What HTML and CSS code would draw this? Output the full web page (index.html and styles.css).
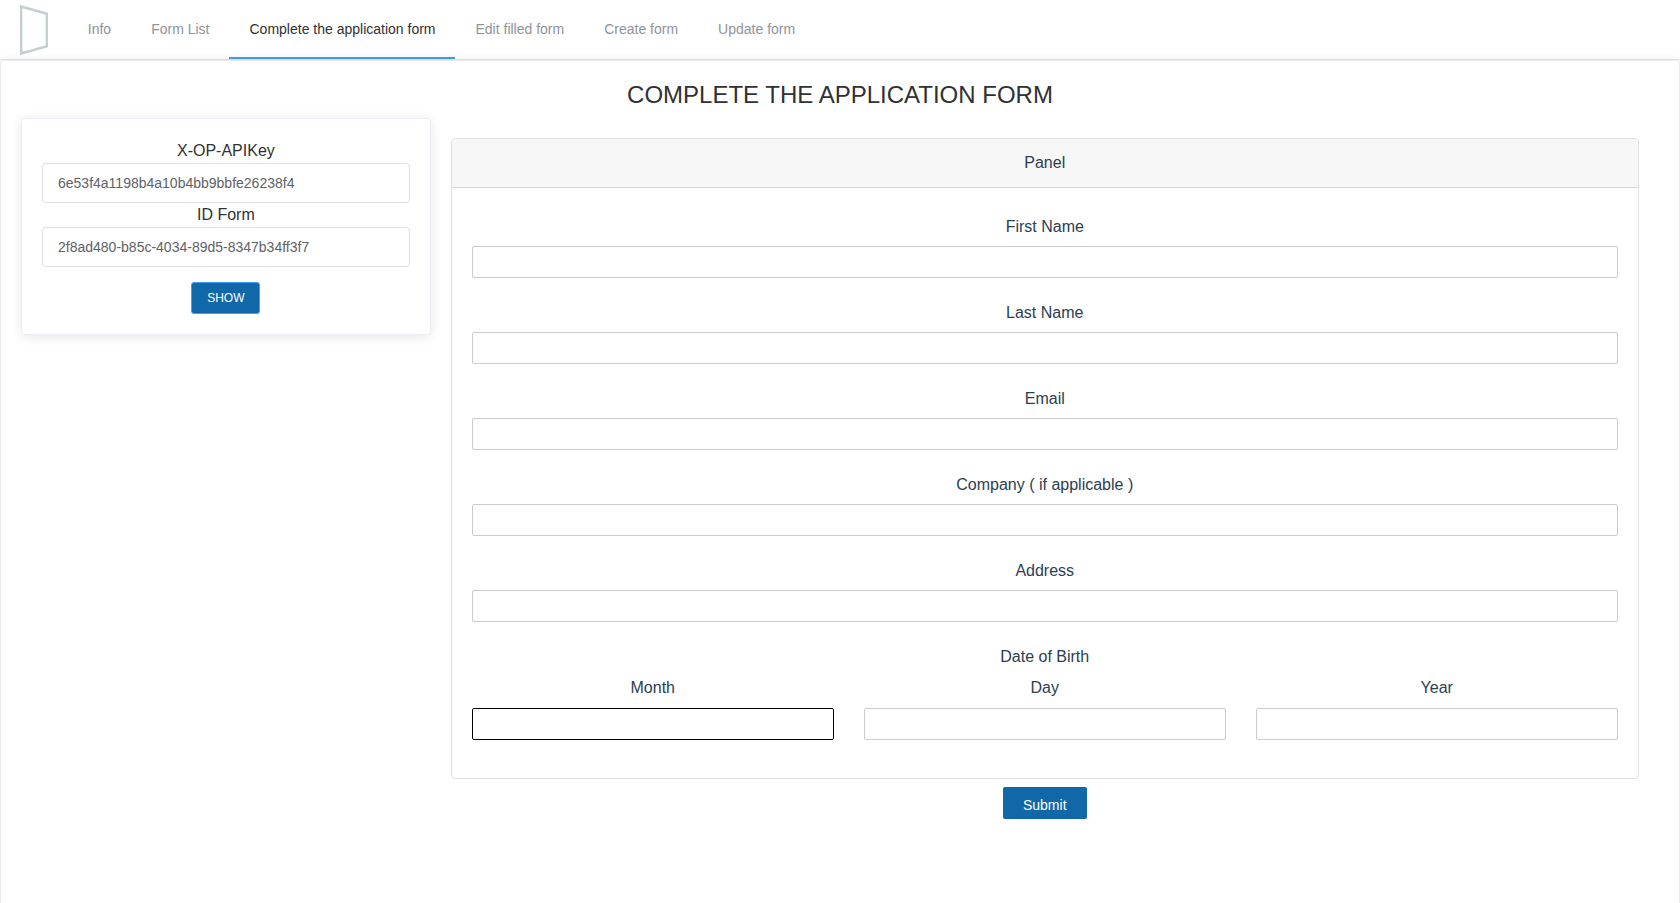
FILE: index.html
```
<!DOCTYPE html>
<html lang="en">
<head>
<meta charset="utf-8">
<title>Complete the application form</title>
<link rel="stylesheet" href="styles.css">
</head>
<body>
<nav class="nav">
  <svg class="logo" width="28" height="50" viewBox="0 0 28 50"><path d="M1.1 1.5 L26.9 8.8 V41.2 L1.1 48.5 Z" fill="none" stroke="#c5cfd2" stroke-width="2.5"/></svg>
  <a class="nav-item">Info</a>
  <a class="nav-item">Form List</a>
  <a class="nav-item active">Complete the application form</a>
  <a class="nav-item">Edit filled form</a>
  <a class="nav-item">Create form</a>
  <a class="nav-item">Update form</a>
</nav>
<main class="page">
  <h1 class="title">COMPLETE THE APPLICATION FORM</h1>
  <div class="columns">
    <section class="key-card">
      <label class="key-label" for="key">X-OP-APIKey</label>
      <input class="key-input" id="key" value="6e53f4a1198b4a10b4bb9bbfe26238f4">
      <label class="key-label" for="form-id">ID Form</label>
      <input class="key-input" id="form-id" value="2f8ad480-b85c-4034-89d5-8347b34ff3f7">
      <button class="show">SHOW</button>
    </section>
    <form class="form">
      <div class="panel">
        <div class="panel-head">Panel</div>
        <div class="panel-body">
          <label class="field">First Name<input class="text-input"></label>
          <label class="field">Last Name<input class="text-input"></label>
          <label class="field">Email<input class="text-input"></label>
          <label class="field">Company ( if applicable )<input class="text-input"></label>
          <label class="field">Address<input class="text-input"></label>
          <div class="birth">Date of Birth</div>
          <div class="date">
            <label class="field">Month<input class="text-input current"></label>
            <label class="field">Day<input class="text-input"></label>
            <label class="field">Year<input class="text-input"></label>
          </div>
        </div>
      </div>
      <button class="submit" type="button">Submit</button>
    </form>
  </div>
</main>
</body>
</html>
```
FILE: styles.css
```
* { box-sizing: border-box; }
body {
  margin: 0;
  height: 100vh;
  display: flex;
  flex-direction: column;
  background: #fff;
  color: #303133;
  font: 16px/24px "Liberation Sans", Arial, sans-serif;
}
input, button { font-family: inherit; margin: 0; }
.nav {
  display: flex;
  flex: none;
  height: 60px;
  padding-left: 20px;
  border-bottom: 1px solid #e6e6e6;
}
.logo { flex: none; margin: 5px 19.8px 0 0; }
.nav-item {
  height: 59px;
  padding: 0 20px;
  border-bottom: 2px solid transparent;
  font-size: 14px;
  line-height: 58px;
  color: #909399;
}
.nav-item.active {
  margin: 0 .4px 0 -.4px;
  padding: 0 19.6px 0 20.4px;
  color: #303133;
  border-bottom-color: #409eff;
}
.page {
  flex: 1;
  min-height: 0;
  padding: 20px 20px 0;
  border: 1px solid #ebebeb;
  border-bottom: 0;
  border-radius: 4px 4px 0 0;
  box-shadow: 0 2px 12px rgba(0, 0, 0, .1);
  background: #fff;
}
.title {
  margin: 0;
  font-size: 24px;
  line-height: 28px;
  font-weight: 400;
  text-align: center;
}
.columns { display: flex; align-items: flex-start; gap: 20px; padding-top: 9px; }
.key-card {
  width: 409.75px;
  flex: none;
  padding: 20px;
  border: 1px solid #ebeef5;
  border-radius: 4px;
  box-shadow: 0 2px 12px rgba(0, 0, 0, .1);
  text-align: center;
}
.key-label { display: block; height: 24px; }
.key-input {
  display: block;
  width: 100%;
  height: 40px;
  padding: 0 15px;
  border: 1px solid #dcdfe6;
  border-radius: 4px;
  font-size: 14px;
  color: #606266;
}
.show {
  display: block;
  width: 69px;
  height: 32px;
  margin: 15px auto 0;
  padding: 0;
  border: 1px solid #409eff;
  border-radius: 3px;
  background: #1068a8;
  color: #fff;
  font-size: 12px;
}
.form {
  width: 1188px;
  padding-top: 20px;
  color: #2c3e50;
  text-align: center;
}
.panel { border: 1px solid #dee2e6; border-radius: 4px; height: 641px; }
.panel-head {
  height: 49px;
  padding-top: 12px;
  background: #f7f7f7;
  border-bottom: 1px solid #d8d9da;
  border-radius: 3px 3px 0 0;
}
.panel-body { padding: 27px 20px 0; }
.field { display: block; height: 86px; }
.text-input {
  display: block;
  width: 100%;
  height: 32px;
  margin-top: 7px;
  border: 1px solid #ccc;
  border-radius: 2px;
  outline: none;
}
.text-input.current { border-color: #000; }
.birth { height: 31px; }
.date { display: grid; grid-template-columns: repeat(3, 1fr); gap: 30px; }
.date .text-input { margin-top: 8px; }
.submit {
  width: 84px;
  height: 32px;
  margin-top: 8px;
  padding: 3px 0 0;
  border: 0;
  border-radius: 2px;
  background: #1068a8;
  color: #fff;
  font-size: 14px;
}
```
